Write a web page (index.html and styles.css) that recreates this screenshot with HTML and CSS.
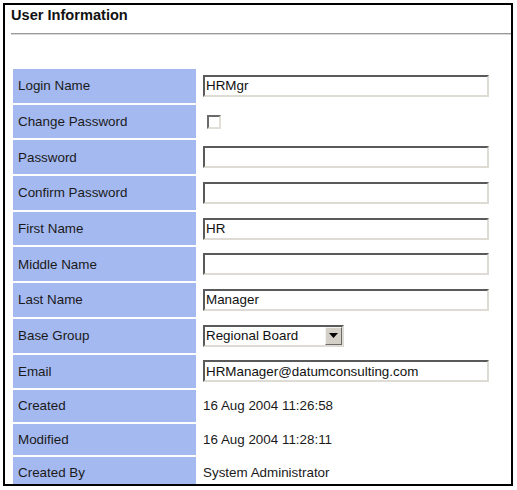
FILE: index.html
```html
<!DOCTYPE html>
<html>
<head>
<meta charset="utf-8">
<title>User Information</title>
<link rel="stylesheet" href="styles.css">
</head>
<body>
<div class="frame">
  <h1 class="title">User Information</h1>
  <div class="rule"></div>
  <table class="form">
    <tr class="in-row"><th>Login Name</th><td><input class="field" type="text" value="HRMgr"></td></tr>
    <tr class="in-row"><th>Change Password</th><td><span class="check"></span></td></tr>
    <tr class="in-row"><th>Password</th><td><input class="field" type="password" value=""></td></tr>
    <tr class="in-row"><th>Confirm Password</th><td><input class="field" type="password" value=""></td></tr>
    <tr class="in-row"><th>First Name</th><td><input class="field" type="text" value="HR"></td></tr>
    <tr class="in-row"><th>Middle Name</th><td><input class="field" type="text" value=""></td></tr>
    <tr class="in-row"><th>Last Name</th><td><input class="field" type="text" value="Manager"></td></tr>
    <tr class="in-row"><th>Base Group</th><td>
      <div class="select"><span class="select-text">Regional Board</span><span class="select-btn"><svg width="9" height="5" viewBox="0 0 9 5"><path d="M0 0H9L4.5 5Z" fill="#000"/></svg></span></div>
    </td></tr>
    <tr class="in-row"><th>Email</th><td><input class="field" type="text" value="HRManager@datumconsulting.com"></td></tr>
    <tr class="tx-row"><th>Created</th><td class="val">16 Aug 2004 11:26:58</td></tr>
    <tr class="tx-row"><th>Modified</th><td class="val">16 Aug 2004 11:28:11</td></tr>
    <tr class="tx-row"><th>Created By</th><td class="val">System Administrator</td></tr>
  </table>
</div>
</body>
</html>
```
FILE: styles.css
```css
html, body {
  margin: 0;
  padding: 0;
  background: #fff;
}
body {
  font-family: "Liberation Sans", Arial, sans-serif;
  color: #111;
}
.frame {
  box-sizing: border-box;
  margin: 3px 0 0 3px;
  width: 510px;
  height: 483px;
  border: 2px solid #000;
  padding-left: 6px;
  overflow: hidden;
}
.title {
  margin: 0;
  padding-top: 2px;
  font-size: 14.6px;
  line-height: 16px;
  font-weight: bold;
  color: #111;
}
.rule {
  margin-top: 10px;
  height: 0;
  border-top: 1px solid #9a9a9a;
  border-bottom: 1px solid #d8d8d8;
}
.form {
  margin-top: 32px;
  border-collapse: separate;
  border-spacing: 2px;
  width: 486px;
  font-size: 13.4px;
}
.form th {
  width: 178px;
  padding: 0 0 0 5px;
  background: #a5b9f1;
  text-align: left;
  font-weight: normal;
  color: #1a1a1a;
  vertical-align: middle;
}
.form td {
  padding: 0 0 0 5px;
  vertical-align: middle;
  color: #1a1a1a;
}
.in-row {
  height: 33.7px;
}
.tx-row {
  height: 31.5px;
}
.val {
  padding-left: 4px;
}
.field {
  display: block;
  box-sizing: border-box;
  width: 286px;
  height: 22px;
  margin: 0;
  padding: 0 1px;
  border: 2px solid;
  border-color: #5a5a5a #dedbd4 #dedbd4 #5a5a5a;
  background: #fff;
  font-family: "Liberation Sans", Arial, sans-serif;
  font-size: 13.4px;
  color: #111;
  outline: none;
}
.check {
  display: block;
  box-sizing: border-box;
  width: 14px;
  height: 14px;
  margin-left: 4px;
  border: 2px solid;
  border-color: #6a6a6a #e2dfd8 #e2dfd8 #6a6a6a;
  background: #fff;
}
.select {
  display: flex;
  align-items: center;
  box-sizing: border-box;
  width: 141px;
  height: 22px;
  border: 2px solid;
  border-color: #5a5a5a #dedbd4 #dedbd4 #5a5a5a;
  background: #fff;
}
.select-text {
  flex: 1;
  padding-left: 1px;
  color: #111;
}
.select-btn {
  display: flex;
  align-items: center;
  justify-content: center;
  box-sizing: border-box;
  width: 17px;
  height: 18px;
  background: #d4d0c8;
  border: 1px solid;
  border-color: #f4f2ee #6a6a6a #6a6a6a #f4f2ee;
}
```
